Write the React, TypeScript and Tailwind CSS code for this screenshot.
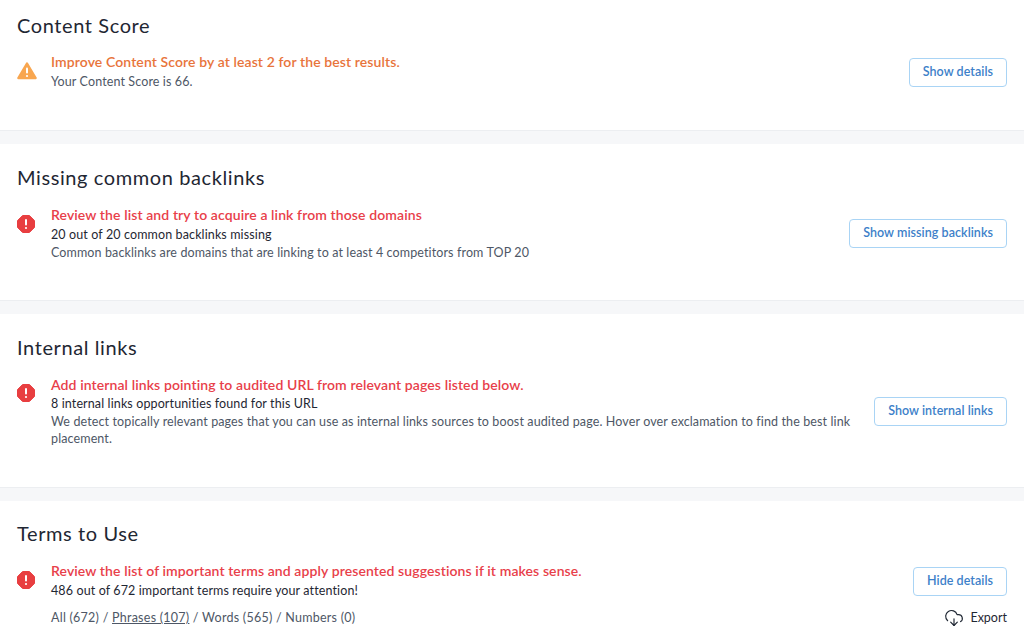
import { CloudDownload } from "lucide-react";
import type { ReactNode } from "react";

function WarnIcon() {
  return (
    <svg width="20" height="18" viewBox="0 0 20 18" className="block">
      <path d="M10 1.5 L18.6 16 H1.4 Z" fill="#f8a650" stroke="#f8a650" strokeWidth="2.4" strokeLinejoin="round" />
      <rect x="9" y="5.5" width="2" height="6" rx="1" fill="#fff" />
      <circle cx="10" cy="14" r="1.1" fill="#fff" />
    </svg>
  );
}

function ErrorIcon() {
  return (
    <svg width="18" height="18" viewBox="0 0 18 18" className="block">
      <path d="M5.6 0.5 H12.4 L17.5 5.6 V12.4 L12.4 17.5 H5.6 L0.5 12.4 V5.6 Z" fill="#e83e40" stroke="#e83e40" strokeLinejoin="round" />
      <rect x="8" y="4" width="2" height="6.5" rx="1" fill="#fff" />
      <circle cx="9" cy="13" r="1.1" fill="#fff" />
    </svg>
  );
}

type SectionProps = {
  title: string;
  tone: "warn" | "error";
  heading: string;
  button: string;
  className: string;
  rowClass: string;
  iconClass?: string;
  children: ReactNode;
  extra?: ReactNode;
};

function Section({ title, tone, heading, button, className, rowClass, iconClass = "pt-[9px]", children, extra }: SectionProps) {
  return (
    <section className={`bg-white px-[17px] ${className}`}>
      <h2 className="text-[20px] leading-[26px] font-normal tracking-[0.6px] text-[#1f2733]">{title}</h2>
      <div className={`flex items-center ${rowClass}`}>
        <div className={`w-[34px] shrink-0 self-start ${iconClass}`}>{tone === "warn" ? <WarnIcon /> : <ErrorIcon />}</div>
        <div className="min-w-0 flex-1 pr-4 tracking-[0.12px]">
          <p className={`text-[14px] leading-[18px] font-semibold tracking-[0.1px] ${tone === "warn" ? "text-[#e8743b]" : "text-[#e8404a]"}`}>
            {heading}
          </p>
          {children}
        </div>
        <button
          type="button"
          className="h-[29px] shrink-0 rounded-[4px] border border-[#a9d4f5] bg-white px-[13px] text-[12.5px] font-semibold tracking-[0.05px] text-[#3d7fc9]"
        >
          {button}
        </button>
      </div>
      {extra}
    </section>
  );
}

function Gap() {
  return <div className="h-[14px] border-t border-[#eceef1] bg-[#f6f7f9]" />;
}

export default function App() {
  return (
    <div className="h-[633px] overflow-hidden bg-white font-['Lato',sans-serif]">
      <Section
        title="Content Score"
        tone="warn"
        heading="Improve Content Score by at least 2 for the best results."
        button="Show details"
        className="h-[130px] pt-[12px]"
        rowClass="mt-[15px]"
      >
        <p className="mt-[2px] text-[12.5px] leading-[18px] text-[#4e5766]">Your Content Score is 66.</p>
      </Section>
      <Gap />
      <Section
        title="Missing common backlinks"
        tone="error"
        heading="Review the list and try to acquire a link from those domains"
        button="Show missing backlinks"
        className="h-[156px] pt-[20px]"
        rowClass="mt-[16px]"
      >
        <p className="mt-[2px] text-[12.5px] leading-[17.5px] text-[#1f2733]">20 out of 20 common backlinks missing</p>
        <p className="text-[12.5px] leading-[17.5px] text-[#4e5766]">Common backlinks are domains that are linking to at least 4 competitors from TOP 20</p>
      </Section>
      <Gap />
      <Section
        title="Internal links"
        tone="error"
        heading="Add internal links pointing to audited URL from relevant pages listed below."
        button="Show internal links"
        className="h-[173px] pt-[20px]"
        rowClass="mt-[16px]"
        iconClass="pt-[8px]"
      >
        <p className="mt-[1px] text-[12.5px] leading-[17.5px] text-[#1f2733]">8 internal links opportunities found for this URL</p>
        <p className="text-[12.5px] leading-[17.5px] text-[#4e5766]">
          We detect topically relevant pages that you can use as internal links sources to boost audited page. Hover over exclamation to find the best link placement.
        </p>
      </Section>
      <Gap />
      <Section
        title="Terms to Use"
        tone="error"
        heading="Review the list of important terms and apply presented suggestions if it makes sense."
        button="Hide details"
        className="h-[132px] pt-[19px]"
        rowClass="mt-[16px]"
        extra={
          <div className="mt-[8px] flex items-center justify-between pl-[34px]">
            <p className="text-[12.5px] leading-[18px] tracking-[0.25px] text-[#4e5766]">
              All (672) / <span className="underline">Phrases (107)</span> / Words (565) / Numbers (0)
            </p>
            <span className="inline-flex items-center gap-[6px] text-[12.5px] text-[#1f2733]">
              <CloudDownload className="h-[20px] w-[20px]" strokeWidth={1.4} />
              Export
            </span>
          </div>
        }
      >
        <p className="mt-[2px] text-[12.5px] leading-[18px] text-[#1f2733]">486 out of 672 important terms require your attention!</p>
      </Section>
    </div>
  );
}
